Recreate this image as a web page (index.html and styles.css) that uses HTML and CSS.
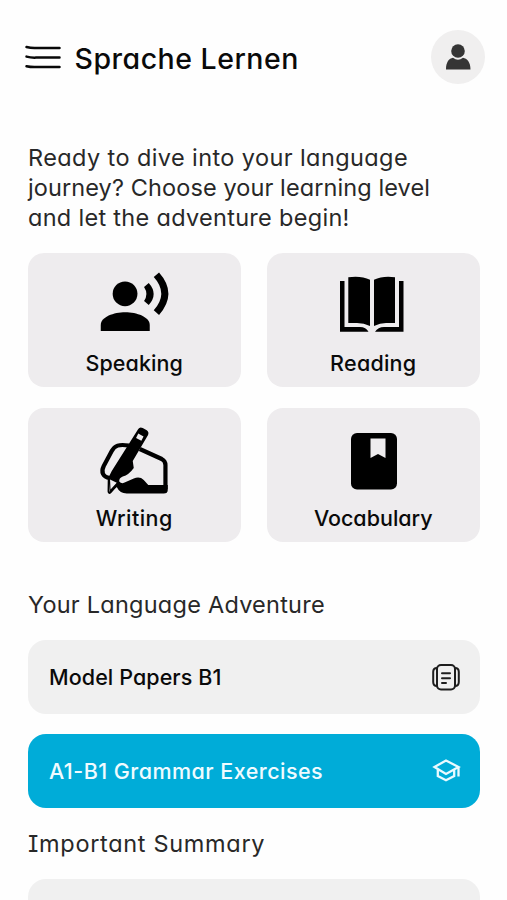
FILE: index.html
```html
<!DOCTYPE html>
<html lang="en">
<head>
<meta charset="utf-8">
<title>Sprache Lernen</title>
<link rel="stylesheet" href="styles.css">
</head>
<body>
<header class="topbar">
  <svg class="menu" viewBox="24 44 38 27" fill="none" stroke="#080808" stroke-width="2.500" stroke-linecap="round"><path d="M26.500 47Q31 48.200 36 48H59.500M26.500 56.600Q31 57.800 36 57.600H59.500M26.500 66.200Q31 67.200 36 67H59.500"/></svg>
  <h1 class="title">Sprache Lernen</h1>
  <div class="avatar">
    <svg viewBox="445 43 26 28" fill="#353535"><circle cx="458" cy="51" r="6.800"/><path d="M446 69.500C446 62 449 58.500 453 57.800Q458 61.500 463 57.800C467 58.500 470.500 62 470.500 69.500Z"/></svg>
  </div>
</header>
<main>
  <p class="intro"><span class="l1">Ready to dive into your language</span><br><span class="l2">journey? Choose your learning level</span><br><span class="l3">and let the adventure begin!</span></p>
  <section class="grid">
    <div class="card">
      <svg class="icon" viewBox="89.250 264 90 80"><circle cx="125.300" cy="293.800" r="12.400"/><path d="M101 331V325C101 317 114 312.300 125.500 312.300S150 317 150 325V331Z"/><path d="M144.300 287L149 283Q158.800 294 149 305L144.300 301Q149 294 144.300 287ZM154 277L159.300 272.500Q178 293.500 159.300 315L154 310.300Q169 293.500 154 277Z"/></svg>
      <span class="label speaking">Speaking</span>
    </div>
    <div class="card">
      <svg class="icon" viewBox="328 264 90 80"><path d="M348.300 277.300Q361 275.500 370 279.800V326Q364 323 357 323H348.300ZM374 279.800Q383 275.500 395 277.300V323H386Q380 323 374 326ZM340 281H344.500V327H360Q366 327 368.500 331.800H340ZM403.500 281H399V327H384Q378 327 375 331.800H403.500Z"/></svg>
      <span class="label reading">Reading</span>
    </div>
    <div class="card">
      <svg class="icon" viewBox="89.250 419 90 80"><path d="M129 445.500C119 444 115 445.500 112 451L104 466C101 472 103 477 110 478M140 449L162 459Q165.700 461 165.700 465V489" fill="none" stroke="#000" stroke-width="4.200"/><path d="M138.500 429Q140 426.500 143 428L147 430.300Q149.500 432 148.300 435L133 461L134 468Q129 475 123 476.500Q119 478 119.500 481.500Q122 484.500 126 482L134 478.500Q140 476 144 480L148.500 485H168V490Q168 493.500 164 493.500H127Q120 493.500 117 487L110.500 492L108.500 478L112 471Z"/><path d="M138.500 433.600L143.800 436.400L141.600 440.800L136.300 438ZM110.300 479.500L117 482.800L110.800 489.500Z" fill="#eeecee"/><path d="M109 478L108.800 491.500Q109 494 111 492L118 484" fill="none" stroke="#000" stroke-width="2"/></svg>
      <span class="label writing">Writing</span>
    </div>
    <div class="card">
      <svg class="icon" viewBox="328 419 90 80"><rect x="351" y="433" width="46" height="56.500" rx="6"/><path d="M370.500 438.500H385.500V458L378 454L370.500 458Z" fill="#eeecee"/></svg>
      <span class="label vocabulary">Vocabulary</span>
    </div>
  </section>
  <h2 class="heading adventure">Your Language Adventure</h2>
  <div class="row">
    <span class="papers">Model Papers B1</span>
    <svg class="row-icon" viewBox="431 662 30 30" fill="none" stroke="#1e1e1e" stroke-width="2" stroke-linecap="round" stroke-linejoin="round"><rect x="437" y="665" width="18" height="24.500" rx="4"/><path d="M437 668Q433.200 668 433.200 672V682Q433.200 686 437 686M455 668Q458.800 668 458.800 672V682Q458.800 686 455 686M442 673.300H450M442 678.200H450M442 683H446"/></svg>
  </div>
  <div class="row active">
    <span class="grammar">A1-B1 Grammar Exercises</span>
    <svg class="row-icon" viewBox="431 757 30 30" fill="none" stroke="#e9faff" stroke-width="2.300"><path d="M434.500 768L446 761.500L458.500 768L446 775ZM437.800 770.500V777L446 781.300L454.200 777V770.500M458.500 768V777.500"/></svg>
  </div>
  <h2 class="heading summary">Important Summary</h2>
  <div class="row last"></div>
</main>
</body>
</html>
```

FILE: styles.css
```css
* { box-sizing: border-box; }
html { height: 900px; overflow: hidden; }
body {
  margin: 0;
  height: 900px;
  overflow: hidden;
  background: #fefefe;
  color: #0a0a0a;
  font-family: Inter, Lato, sans-serif;
  font-feature-settings: "cv11", "cv08";
}
svg { display: block; flex: none; }
.topbar {
  display: flex;
  align-items: center;
  height: 54px;
  margin-top: 30px;
  padding: 0 22px 0 24px;
}
.menu { width: 38px; height: 27px; }
.title {
  margin: 3px 0 0 12.5px;
  font-size: 28.5px;
  font-weight: 500;
  letter-spacing: .5px;
  line-height: 36px;
  white-space: nowrap;
}
.avatar {
  display: flex;
  align-items: center;
  justify-content: center;
  width: 54px;
  height: 54px;
  margin-left: auto;
  border-radius: 50%;
  background: #f0efef;
}
.avatar svg { width: 26px; height: 28px; }
main { height: 816px; overflow: hidden; padding: 0 27px 0 28px; }
.intro {
  margin: 58px 0 19.4px;
  padding-top: .6px;
  color: #282828;
  font-size: 23.5px;
  font-weight: 400;
  line-height: 30.2px;
  white-space: nowrap;
}
.l1 { letter-spacing: .4px; }
.l2 { letter-spacing: .1px; }
.l3 { letter-spacing: .3px; }
.grid {
  display: grid;
  grid-template-columns: 212.5px 212.5px;
  grid-auto-rows: 134.5px;
  gap: 20.5px 26.5px;
}
.card {
  display: flex;
  flex-direction: column;
  align-items: center;
  padding-top: 11.5px;
  border-radius: 16px;
  background: #eeecee;
}
.icon { width: 90px; height: 80px; }
.label {
  margin-top: 5px;
  font-size: 21.5px;
  font-weight: 500;
  line-height: 28px;
}
.speaking { letter-spacing: .1px; }
.reading { letter-spacing: .25px; }
.writing { letter-spacing: .45px; }
.heading {
  margin: 48px 0 20px;
  color: #282828;
  font-size: 23.5px;
  font-weight: 400;
  line-height: 30px;
  white-space: nowrap;
}
.adventure { letter-spacing: .24px; }
.row {
  display: flex;
  align-items: center;
  justify-content: space-between;
  height: 73.5px;
  margin-bottom: 20.5px;
  padding: 1px 19px 0 21px;
  border-radius: 18px;
  background: #f0f0f0;
  font-size: 21.5px;
  font-weight: 500;
  white-space: nowrap;
}
.row-icon { width: 30px; height: 30px; }
.papers { letter-spacing: .08px; }
.grammar { letter-spacing: .46px; }
.active { background: #00acd8; color: #f0fbff; }
.summary { margin-top: 21.5px; letter-spacing: .68px; }
```
